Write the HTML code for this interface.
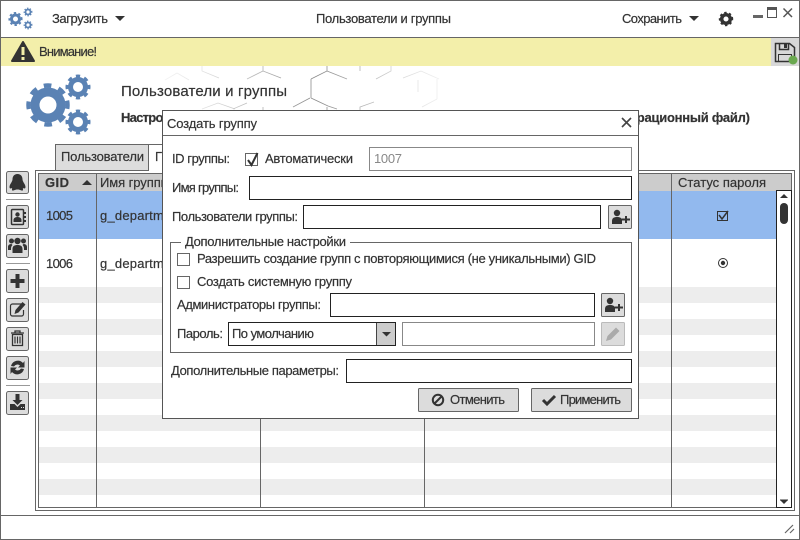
<!DOCTYPE html>
<html><head><meta charset="utf-8"><title>Пользователи и группы</title>
<style>
html,body{margin:0;padding:0;background:#fff;width:800px;height:540px;overflow:hidden}
svg{display:block}
text{font-family:"Liberation Sans","DejaVu Sans",sans-serif;font-size:13px;fill:#333;stroke:#333;stroke-width:.2}
.b{font-weight:bold}
text.dg{fill:#888;stroke:none}
.in{fill:#fff;stroke:#222}
.dis{fill:#fff;stroke:#888}
.btn{fill:#dcdcdc;stroke:#666}
.ic{fill:#333}
.l{stroke:#666;fill:none}
.gr{fill:none;stroke:#5a82b4}
.t{pathLength:16;stroke-dasharray:1 1;stroke-dashoffset:.5}
</style></head><body>
<svg width="800" height="540" viewBox="0 0 800 540" xmlns="http://www.w3.org/2000/svg">
<rect x="0" y="0" width="800" height="540" fill="#fff"/>

<!-- hexagons -->
<defs><linearGradient id="fd" x1="135" x2="465" y1="0" y2="0" gradientUnits="userSpaceOnUse">
<stop offset="0" stop-color="#fff"/><stop offset=".2" stop-color="#e4e4e4"/><stop offset=".55" stop-color="#888"/><stop offset=".8" stop-color="#d8d8d8"/><stop offset="1" stop-color="#fff"/></linearGradient></defs>
<g fill="none" stroke="url(#fd)" stroke-width=".8">
<path d="M202 66v5l17 7M263 66v5l-16 8M263 71l18 7M327 66v5l-16 8M327 71l20 8M360 66v5M391 66v5l-15 8"/>
<path d="M311 79v19M310 98l-17 9M311 98l17 8 9 3M202 109l16-6 17 6M233 109l14-6M263 110v-3M327 110v-3M360 110v-3l14-5"/>
<path d="M165 80l12-7 12 7M403 78l18-7 18 8M437 79v20M422 107l15-8M418 80v12"/>
</g>

<!-- title bar logo -->
<circle class="gr" cx="15.500" cy="19" r="4" stroke-width="3"/>
<circle class="gr" cx="15.500" cy="19" r="6.200" stroke-width="1.700" pathLength="16" stroke-dasharray="1 1" stroke-dashoffset=".5"/>
<circle class="gr" cx="28" cy="12" r="2.500" stroke-width="1.800"/>
<circle class="gr" cx="28" cy="12" r="3.800" stroke-width="1.200" pathLength="16" stroke-dasharray="1 1" stroke-dashoffset=".5"/>
<circle class="gr" cx="28" cy="25" r="2.500" stroke-width="1.800"/>
<circle class="gr" cx="28" cy="25" r="3.800" stroke-width="1.200" pathLength="16" stroke-dasharray="1 1" stroke-dashoffset=".5"/>

<text x="52" y="23" textLength="56">Загрузить</text>
<path class="ic" d="M115 16h10l-5 5z"/>
<text x="316" y="23" textLength="135">Пользователи и группы</text>
<text x="622" y="23" textLength="60">Сохранить</text>
<path class="ic" d="M689 16h10l-5 5z"/>
<circle cx="726" cy="19" r="4.300" fill="none" stroke="#333" stroke-width="3.500"/>
<circle cx="726" cy="19" r="6.300" fill="none" stroke="#333" stroke-width="1.800" pathLength="16" stroke-dasharray="1 1" stroke-dashoffset=".5"/>
<rect x="753" y="15" width="10" height="3" fill="#666"/>
<path d="M767.500 7.500h9v10h-9z" fill="#fff" stroke="#555"/><rect x="767" y="7" width="10" height="3" fill="#555"/>
<path d="M783.500 8.500l8.500 8.500M792 8.500l-8.500 8.500" stroke="#555" stroke-width="1.500" fill="none"/>

<!-- warning bar -->
<rect x="1" y="38" width="798" height="28" fill="#f3efaa"/>
<rect x="771" y="38" width="28" height="28" fill="#d8d8d8"/>
<path d="M0 37.500H800" stroke="#666"/>
<path d="M23 42L34 61H12z" fill="#333" stroke="#333" stroke-width="2" stroke-linejoin="round"/>
<rect x="21.500" y="47" width="3" height="8" fill="#f3efaa"/><rect x="21.500" y="57" width="3" height="3" fill="#f3efaa"/>
<text x="39" y="56" textLength="58">Внимание!</text>
<path d="M775.500 43.500h14l5 4v14h-19z" fill="none" stroke="#333" stroke-width="1.500"/>
<path d="M779.500 43.500v6h9v-6" fill="none" stroke="#333" stroke-width="1.500"/><rect x="784" y="44" width="3" height="4" fill="#333"/>
<path d="M778.500 61.500v-7h13v7" fill="none" stroke="#333"/>
<circle cx="793" cy="60" r="4.500" fill="#6aa84f"/>

<!-- big gears -->
<circle class="gr" cx="48" cy="105" r="13" stroke-width="9"/>
<circle class="gr" cx="48" cy="105" r="19.500" stroke-width="4.500" pathLength="16" stroke-dasharray="1 1" stroke-dashoffset=".5"/>
<circle class="gr" cx="78" cy="87" r="7.500" stroke-width="5"/>
<circle class="gr" cx="78" cy="87" r="11" stroke-width="3" pathLength="16" stroke-dasharray="1 1" stroke-dashoffset=".5"/>
<circle class="gr" cx="78" cy="122" r="7.500" stroke-width="5"/>
<circle class="gr" cx="78" cy="122" r="11" stroke-width="3" pathLength="16" stroke-dasharray="1 1" stroke-dashoffset=".5"/>

<text x="121" y="96" style="font-size:15px" textLength="166">Пользователи и группы</text>
<text class="b" x="121" y="122" textLength="62">Настройка</text>
<text class="b" x="630" y="122" textLength="120">урационный файл)</text>

<!-- tabs -->
<rect x="55.500" y="144.500" width="93" height="26" fill="#ddd" stroke="#666"/>
<rect x="148.500" y="144.500" width="60" height="26" fill="#fff" stroke="#666"/>
<text x="61" y="161" textLength="83">Пользователи</text>
<text x="155" y="161" textLength="50">Группы</text>

<!-- table frame -->
<rect x="35.500" y="170.500" width="759" height="340" fill="#fff" stroke="#666"/>
<rect x="149" y="170" width="60" height="1.500" fill="#fff"/>
<rect x="39" y="174" width="752" height="17" fill="#ccc"/>
<rect x="39" y="191" width="737" height="48" fill="#92b9ee"/>
<g fill="#ededed">
<rect x="39" y="287" width="737" height="16"/><rect x="39" y="319" width="737" height="16"/>
<rect x="39" y="351" width="737" height="16"/><rect x="39" y="383" width="737" height="16"/>
<rect x="39" y="415" width="737" height="16"/><rect x="39" y="447" width="737" height="16"/>
<rect x="39" y="479" width="737" height="16"/>
</g>
<rect x="38.500" y="173.500" width="753" height="334" fill="none" stroke="#666"/>
<path class="l" d="M96.500 174V507M260.500 174V507M424.500 174V507M671.500 174V507"/>
<text class="b" x="45" y="187" textLength="24">GID</text>
<path class="ic" d="M82 185l5-5 5 5z"/>
<text x="100" y="187" textLength="70">Имя группы</text>
<text x="678" y="187" textLength="88">Статус пароля</text>
<text x="46" y="220" textLength="27">1005</text>
<text x="100" y="220" textLength="90">g_department1</text>
<text x="46" y="268" textLength="27">1006</text>
<text x="100" y="268" textLength="90">g_department2</text>
<rect x="717.500" y="211.500" width="10" height="9" fill="none" stroke="#333"/>
<path d="M719 215l3 4 6-8" fill="none" stroke="#333" stroke-width="1.500"/>
<circle cx="723" cy="263" r="4.500" fill="none" stroke="#333"/><circle cx="723" cy="263" r="2.200" fill="#333"/>

<!-- scrollbar -->
<rect x="776.500" y="190.500" width="15" height="317" fill="#fff" stroke="#222"/>
<path class="ic" d="M780 198l4-4 4 4z"/>
<rect x="780" y="203" width="8" height="21" rx="4" fill="#333"/>
<path class="ic" d="M780 500h8l-4 4z"/><rect x="780" y="499.500" width="8" height="1" fill="#333"/>

<!-- left toolbar -->
<g>
<rect class="btn" x="6.500" y="171.500" width="22" height="22" rx="2"/>
<rect class="btn" x="6.500" y="205.500" width="22" height="23" rx="2"/>
<rect class="btn" x="6.500" y="234.500" width="22" height="23" rx="2"/>
<rect class="btn" x="6.500" y="269.500" width="22" height="23" rx="2"/>
<rect class="btn" x="6.500" y="298.500" width="22" height="23" rx="2"/>
<rect class="btn" x="6.500" y="327.500" width="22" height="23" rx="2"/>
<rect class="btn" x="6.500" y="356.500" width="22" height="23" rx="2"/>
<rect class="btn" x="6.500" y="391.500" width="22" height="23" rx="2"/>
<path d="M6 199.500h24M6 263.500h24M6 385.500h24" stroke="#999"/>
<path class="ic" d="M17.500 174c-3.500 0-5 2.500-5 5.500 0 2-3 5-3 7.500 0 1.500 1 2 2.500 1 .5 1.500-1 2.500 1 2.500 1.500 0 2-1 4.500-1s3 1 4.500 1c2 0 .5-1 1-2.500 1.500 1 2.500.5 2.500-1 0-2.500-3-5.500-3-7.500 0-3-1.500-5.500-5-5.500z"/>
<rect x="11.500" y="209.500" width="12" height="15" rx="1" fill="#dcdcdc" stroke="#333" stroke-width="1.500"/>
<rect x="24" y="212" width="2" height="2" fill="#333"/><rect x="24" y="216" width="2" height="2" fill="#333"/><rect x="24" y="220" width="2" height="2" fill="#333"/>
<circle cx="17.500" cy="214.500" r="2.200" fill="#333"/><path class="ic" d="M13.500 222v-2c0-2 2-3 4-3s4 1 4 3v2z"/>
<circle cx="17.500" cy="241" r="3.200" fill="#333"/><circle cx="11.500" cy="241" r="2.500" fill="#333"/><circle cx="23.500" cy="241" r="2.500" fill="#333"/>
<path class="ic" d="M12.500 253v-4c0-3 2-4 5-4s5 1 5 4v4zM8 250v-3c0-2 1.500-3 3.500-3l1 1c-1 1-1.500 2-1.500 4v1zM27 250v-3c0-2-1.500-3-3.500-3l-1 1c1 1 1.500 2 1.500 4v1z"/>
<path class="ic" d="M15.500 274h4v5h5v4h-5v5h-4v-5h-5v-4h5z"/>
<path d="M21.500 304h-9a2 2 0 0 0-2 2v8a2 2 0 0 0 2 2h9a2 2 0 0 0 2-2v-4" fill="none" stroke="#333" stroke-width="1.200"/>
<path class="ic" d="M15.500 310l7-8 3 2.500-7 8-4 1.500z"/>
<path d="M12.500 334.500h10v11h-10z" fill="none" stroke="#333" stroke-width="1.300"/>
<path d="M11 333h13M15 333v-2h5v2" fill="none" stroke="#333" stroke-width="1.300"/>
<path d="M15 336.500v7M17.500 336.500v7M20 336.500v7" stroke="#333" stroke-width="1.200"/>
<path d="M11 366a7 7 0 0 1 12-3l1.500-2v6.500h-6.500l2-2a4 4 0 0 0-6 1zM24 369a7 7 0 0 1-12 3l-1.500 2v-6.500h6.500l-2 2a4 4 0 0 0 6-1z" fill="#333"/>
<path class="ic" d="M15.500 394h4v6h3l-5 5-5-5h3z"/>
<path class="ic" d="M10 404h4.500l3 3 3-3h4.500v6h-15z"/><rect x="21" y="407" width="1" height="1" fill="#ddd"/><rect x="23" y="407" width="1" height="1" fill="#ddd"/>
</g>

<!-- status bar -->
<path d="M0 515.500H800" stroke="#666"/>
<path d="M785 533l8-8M790 533l4-4" stroke="#666" stroke-width="1.200" fill="none"/>

<!-- outer border -->
<rect x="0.500" y="0.500" width="799" height="539" fill="none" stroke="#666"/>

<!-- dialog -->
<rect x="162.500" y="110.500" width="476" height="308" fill="#fff" stroke="#555"/>
<path d="M163 135.500H638" stroke="#666"/>
<text x="167" y="128" textLength="90">Создать группу</text>
<path d="M622 118l9 9M631 118l-9 9" stroke="#444" stroke-width="1.600" fill="none"/>

<text x="172" y="163" textLength="58">ID группы:</text>
<rect x="245.500" y="153.500" width="12" height="12" fill="#fff" stroke="#666"/>
<path d="M248 160l3.500 5 6-12" fill="none" stroke="#333" stroke-width="2"/>
<text x="265" y="163" textLength="88">Автоматически</text>
<rect class="dis" x="369.500" y="147.500" width="262" height="23"/>
<text class="dg" x="374" y="163" textLength="28">1007</text>

<text x="172" y="192" textLength="67">Имя группы:</text>
<rect class="in" x="249.500" y="176.500" width="382" height="23"/>
<text x="172" y="221" textLength="126">Пользователи группы:</text>
<rect class="in" x="303.500" y="205.500" width="297" height="23"/>
<rect class="btn" x="608.500" y="205.500" width="23" height="23" rx="1"/>
<circle cx="617" cy="213" r="3.200" fill="#333"/><path class="ic" d="M612 224v-3c0-3 2-4 5-4s4 1 5 2v5z"/>
<path class="ic" d="M622 218.500h3v-2.500h2v2.500h3v2h-3v2.500h-2v-2.500h-3z"/>

<path d="M181 242.500H170.500V352.500H631.500V242.500H350" fill="none" stroke="#666"/>
<text x="185" y="246" textLength="161">Дополнительные настройки</text>
<rect x="177.500" y="253.500" width="12" height="12" fill="#fff" stroke="#666"/>
<text x="197" y="263" textLength="399">Разрешить создание групп с повторяющимися (не уникальными) GID</text>
<rect x="177.500" y="276.500" width="12" height="12" fill="#fff" stroke="#666"/>
<text x="197" y="286" textLength="155">Создать системную группу</text>
<text x="177" y="309" textLength="144">Администраторы группы:</text>
<rect class="in" x="330.500" y="293.500" width="264" height="23"/>
<rect class="btn" x="601.500" y="293.500" width="23" height="23" rx="1"/>
<circle cx="610" cy="301" r="3.200" fill="#333"/><path class="ic" d="M605 312v-3c0-3 2-4 5-4s4 1 5 2v5z"/>
<path class="ic" d="M615 306.500h3v-2.500h2v2.500h3v2h-3v2.500h-2v-2.500h-3z"/>
<text x="177" y="338" textLength="46">Пароль:</text>
<rect x="376" y="322" width="20" height="23" fill="#ccc"/>
<rect x="228.500" y="322.500" width="167" height="23" fill="none" stroke="#222"/>
<path d="M376.500 323v22" stroke="#444"/>
<text x="232" y="338" textLength="82">По умолчанию</text>
<path class="ic" d="M382 332h9l-4.500 4.500z"/>
<rect class="dis" x="402.500" y="322.500" width="192" height="23"/>
<rect x="601.500" y="322.500" width="23" height="23" rx="1" fill="#dcdcdc" stroke="#bbb"/>
<path d="M606 341l1.500-5 8.500-8.500 3.500 3.500-8.500 8.500z" fill="#aaa"/>

<text x="171" y="375" textLength="168">Дополнительные параметры:</text>
<rect class="in" x="346.500" y="359.500" width="285" height="23"/>

<rect class="btn" x="418.500" y="388.500" width="100" height="23" rx="1"/>
<circle cx="438" cy="400" r="5.200" fill="none" stroke="#333" stroke-width="2"/><path d="M434.500 403.500l7-7" stroke="#333" stroke-width="2"/>
<text x="450" y="404" textLength="55">Отменить</text>
<rect class="btn" x="531.500" y="388.500" width="100" height="23" rx="1"/>
<path d="M543 400l4 4 8-8" fill="none" stroke="#333" stroke-width="3"/>
<text x="560" y="404" textLength="61">Применить</text>
</svg>
</body></html>
